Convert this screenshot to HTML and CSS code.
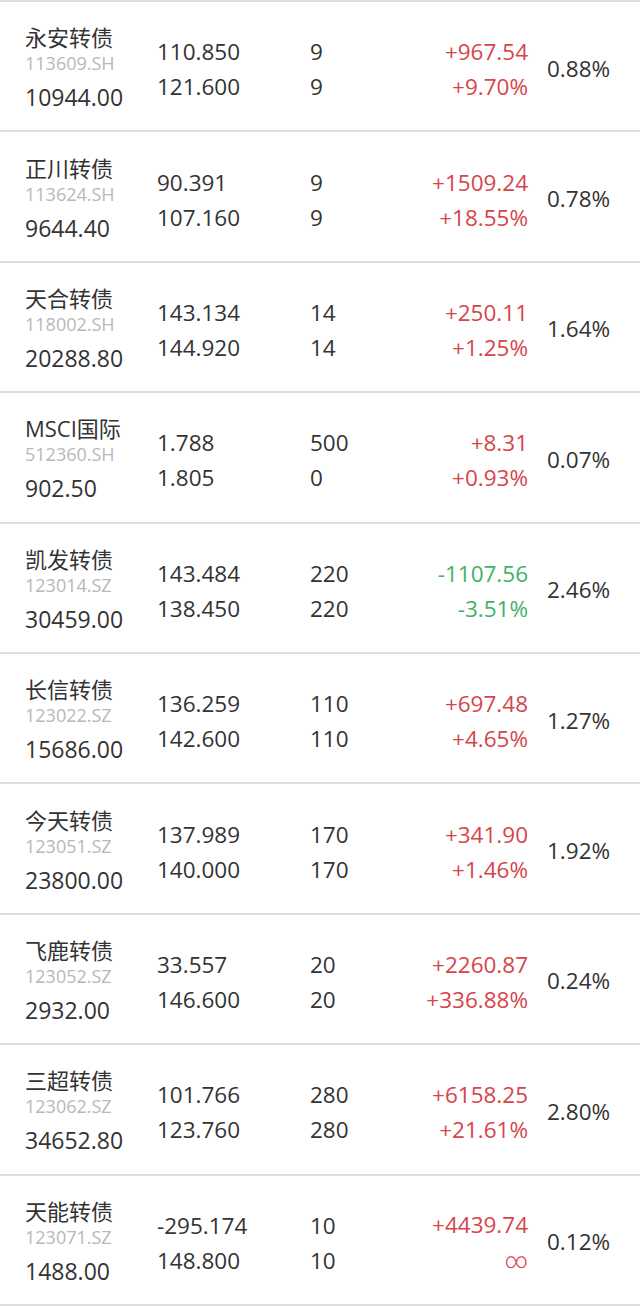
FILE: index.html
```html
<!DOCTYPE html>
<html lang="zh-CN">
<head>
<meta charset="utf-8">
<title>持仓</title>
<link rel="stylesheet" href="styles.css">
</head>
<body>
<div class="list">
  <div class="row">
    <div class="c-name"><div class="name">永安转债</div><div class="code">113609.SH</div><div class="val">10944.00</div></div>
    <div class="c-col"><div>110.850</div><div>121.600</div></div>
    <div class="c-col"><div>9</div><div>9</div></div>
    <div class="c-col right up"><div>+967.54</div><div>+9.70%</div></div>
    <div class="c-pct">0.88%</div>
  </div>
  <div class="row">
    <div class="c-name"><div class="name">正川转债</div><div class="code">113624.SH</div><div class="val">9644.40</div></div>
    <div class="c-col"><div>90.391</div><div>107.160</div></div>
    <div class="c-col"><div>9</div><div>9</div></div>
    <div class="c-col right up"><div>+1509.24</div><div>+18.55%</div></div>
    <div class="c-pct">0.78%</div>
  </div>
  <div class="row">
    <div class="c-name"><div class="name">天合转债</div><div class="code">118002.SH</div><div class="val">20288.80</div></div>
    <div class="c-col"><div>143.134</div><div>144.920</div></div>
    <div class="c-col"><div>14</div><div>14</div></div>
    <div class="c-col right up"><div>+250.11</div><div>+1.25%</div></div>
    <div class="c-pct">1.64%</div>
  </div>
  <div class="row">
    <div class="c-name"><div class="name">MSCI国际</div><div class="code">512360.SH</div><div class="val">902.50</div></div>
    <div class="c-col"><div>1.788</div><div>1.805</div></div>
    <div class="c-col"><div>500</div><div>0</div></div>
    <div class="c-col right up"><div>+8.31</div><div>+0.93%</div></div>
    <div class="c-pct">0.07%</div>
  </div>
  <div class="row">
    <div class="c-name"><div class="name">凯发转债</div><div class="code">123014.SZ</div><div class="val">30459.00</div></div>
    <div class="c-col"><div>143.484</div><div>138.450</div></div>
    <div class="c-col"><div>220</div><div>220</div></div>
    <div class="c-col right down"><div>-1107.56</div><div>-3.51%</div></div>
    <div class="c-pct">2.46%</div>
  </div>
  <div class="row">
    <div class="c-name"><div class="name">长信转债</div><div class="code">123022.SZ</div><div class="val">15686.00</div></div>
    <div class="c-col"><div>136.259</div><div>142.600</div></div>
    <div class="c-col"><div>110</div><div>110</div></div>
    <div class="c-col right up"><div>+697.48</div><div>+4.65%</div></div>
    <div class="c-pct">1.27%</div>
  </div>
  <div class="row">
    <div class="c-name"><div class="name">今天转债</div><div class="code">123051.SZ</div><div class="val">23800.00</div></div>
    <div class="c-col"><div>137.989</div><div>140.000</div></div>
    <div class="c-col"><div>170</div><div>170</div></div>
    <div class="c-col right up"><div>+341.90</div><div>+1.46%</div></div>
    <div class="c-pct">1.92%</div>
  </div>
  <div class="row">
    <div class="c-name"><div class="name">飞鹿转债</div><div class="code">123052.SZ</div><div class="val">2932.00</div></div>
    <div class="c-col"><div>33.557</div><div>146.600</div></div>
    <div class="c-col"><div>20</div><div>20</div></div>
    <div class="c-col right up"><div>+2260.87</div><div>+336.88%</div></div>
    <div class="c-pct">0.24%</div>
  </div>
  <div class="row">
    <div class="c-name"><div class="name">三超转债</div><div class="code">123062.SZ</div><div class="val">34652.80</div></div>
    <div class="c-col"><div>101.766</div><div>123.760</div></div>
    <div class="c-col"><div>280</div><div>280</div></div>
    <div class="c-col right up"><div>+6158.25</div><div>+21.61%</div></div>
    <div class="c-pct">2.80%</div>
  </div>
  <div class="row">
    <div class="c-name"><div class="name">天能转债</div><div class="code">123071.SZ</div><div class="val">1488.00</div></div>
    <div class="c-col"><div>-295.174</div><div>148.800</div></div>
    <div class="c-col"><div>10</div><div>10</div></div>
    <div class="c-col right up"><div>+4439.74</div><div><span class="inf">∞</span></div></div>
    <div class="c-pct">0.12%</div>
  </div>
</div>
</body>
</html>
```
FILE: styles.css
```css
html, body {
  margin: 0;
  padding: 0;
  background: #ffffff;
}
body {
  font-family: "Open Sans", "Noto Sans CJK SC", sans-serif;
  color: #333333;
}
.list {
  border-top: 2px solid #dedede;
}
.row {
  display: grid;
  grid-template-columns: 132px 153px 100px 118px 93px;
  padding-left: 25px;
  height: 128.4px;
  border-bottom: 2px solid #dedede;
  align-items: center;
}
.c-name {
  display: flex;
  flex-direction: column;
  padding-top: 2px;
}
.name {
  font-size: 22px;
  line-height: 30px;
  color: #333333;
}
.code {
  font-size: 18px;
  line-height: 22px;
  color: #b8b8b8;
}
.val {
  font-size: 23px;
  line-height: 30px;
  margin-top: 8px;
  color: #333333;
}
.c-col {
  display: flex;
  flex-direction: column;
  font-size: 22.5px;
  line-height: 35px;
  padding-top: 6px;
}
.right {
  text-align: right;
}
.up {
  color: #d6454a;
}
.down {
  color: #3db366;
}
.inf {
  font-family: Roboto, sans-serif;
  font-size: 22px;
  font-weight: 300;
}
.c-pct {
  font-size: 22.5px;
  line-height: 35px;
  padding-top: 4px;
  padding-left: 19px;
}
```
